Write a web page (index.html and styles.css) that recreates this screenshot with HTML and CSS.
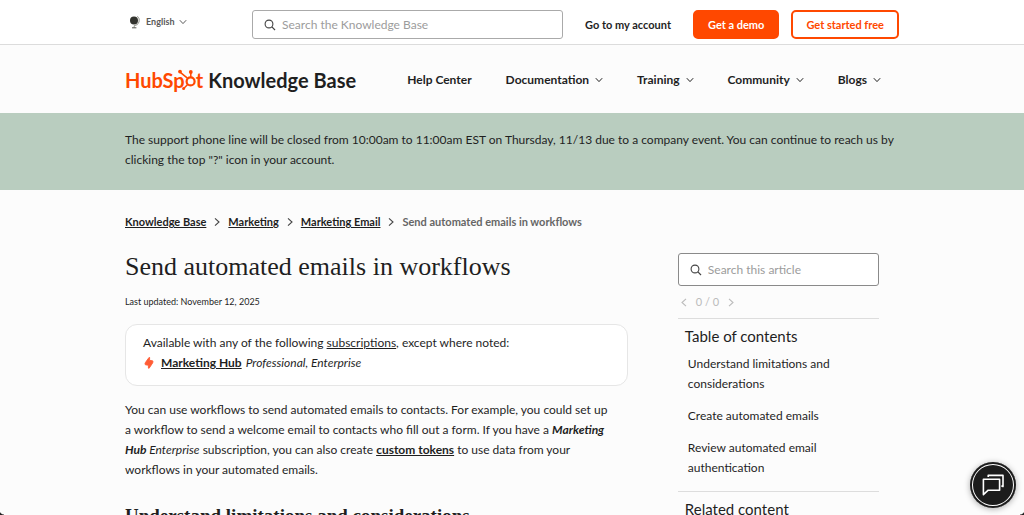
FILE: index.html
```html
<!DOCTYPE html>
<html lang="en">
<head>
<meta charset="utf-8">
<meta name="viewport" content="width=device-width, initial-scale=1">
<title>Send automated emails in workflows</title>
<link rel="stylesheet" href="styles.css">
</head>
<body>
<svg class="sprites" aria-hidden="true">
  <symbol id="down" viewBox="0 0 8 8"><path d="M0.8 2.2 4 5.6 7.2 2.2" fill="none" stroke="currentColor" stroke-width="1"/></symbol>
  <symbol id="next" viewBox="0 0 8 8"><path d="M2 0.4 6 4 2 7.6" fill="none" stroke="currentColor" stroke-width="1.1"/></symbol>
  <symbol id="prev" viewBox="0 0 8 8"><path d="M6 0.4 2 4 6 7.6" fill="none" stroke="currentColor" stroke-width="1.1"/></symbol>
  <symbol id="lens" viewBox="0 0 12 12"><circle cx="5" cy="5" r="3.9" fill="none" stroke="currentColor" stroke-width="1.1"/><path d="M7.9 7.9 11 11" stroke="currentColor" stroke-width="1.2"/></symbol>
</svg>

<div class="topbar">
  <div class="container topbar-row">
    <button class="language" type="button">
      <svg class="globe" viewBox="0 0 12 14" aria-hidden="true"><circle cx="5" cy="5.4" r="4" fill="#33342f"/><path d="M8.4 1.2A5.4 5.4 0 0 1 5.2 10.7L5.2 12.6" fill="none" stroke="#77786f" stroke-width="0.8"/><path d="M3 12.8H7.4" stroke="#55564f" stroke-width="1"/></svg>
      <span>English</span>
      <svg class="chevron" aria-hidden="true"><use href="#down"/></svg>
    </button>
    <label class="search search-main">
      <svg class="lens" aria-hidden="true"><use href="#lens"/></svg>
      <input type="search" placeholder="Search the Knowledge Base" aria-label="Search the Knowledge Base">
    </label>
    <div class="actions">
      <a class="account" href="#">Go to my account</a>
      <a class="button button-solid" href="#">Get a demo</a>
      <a class="button button-outline" href="#">Get started free</a>
    </div>
  </div>
</div>

<header class="container header">
  <a class="logo" href="#" aria-label="HubSpot Knowledge Base">
    <span class="logo-mark">HubSp<svg class="sprocket" viewBox="0 0 18 22" aria-hidden="true"><g fill="none" stroke="currentColor"><circle cx="12.6" cy="12.4" r="4" stroke-width="2.2"/><path d="M12.8 8V3.4M9.4 9.2 2 3.2M9.6 15.4 6 19.2" stroke-width="1.5"/></g><g fill="currentColor"><circle cx="12.8" cy="3" r="1.9"/><circle cx="2" cy="2.6" r="1.9"/><circle cx="5.6" cy="19.6" r="1.5"/></g></svg>t</span>
    <span>Knowledge Base</span>
  </a>
  <nav class="nav" aria-label="Main">
    <a href="#">Help Center</a>
    <button type="button">Documentation <svg class="chevron" aria-hidden="true"><use href="#down"/></svg></button>
    <button type="button">Training <svg class="chevron" aria-hidden="true"><use href="#down"/></svg></button>
    <button type="button">Community <svg class="chevron" aria-hidden="true"><use href="#down"/></svg></button>
    <button type="button">Blogs <svg class="chevron" aria-hidden="true"><use href="#down"/></svg></button>
  </nav>
</header>

<div class="notice">
  <p class="container">The support phone line will be closed from 10:00am to 11:00am EST on Thursday, 11/13 due to a company event. You can continue to reach us by clicking the top "?" icon in your account.</p>
</div>

<div class="container page">
  <nav class="breadcrumbs" aria-label="Breadcrumb">
    <a href="#">Knowledge Base</a><svg class="chevron" aria-hidden="true"><use href="#next"/></svg>
    <a href="#">Marketing</a><svg class="chevron" aria-hidden="true"><use href="#next"/></svg>
    <a href="#">Marketing Email</a><svg class="chevron" aria-hidden="true"><use href="#next"/></svg>
    <span>Send automated emails in workflows</span>
  </nav>
  <div class="columns">
    <main class="article">
      <h1>Send automated emails in workflows</h1>
      <p class="updated">Last updated: November 12, 2025</p>
      <div class="availability">
        <p>Available with any of the following <a href="#">subscriptions</a>, except where noted:</p>
        <p class="product"><svg class="bolt" viewBox="0 0 10 12" aria-hidden="true"><path d="M5.6 0.4V3.4L8.6 3.8Q9.4 4.8 8.6 6L5 11.4 4.4 11V8.2L1.4 7.8Q0.6 6.8 1.4 5.6L5 0.5Z" fill="#ff5c35" stroke="#ff5c35" stroke-width="0.9" stroke-linejoin="round"/></svg><a href="#"><b>Marketing Hub</b></a> <i>Professional, Enterprise</i></p>
      </div>
      <p class="intro">You can use workflows to send automated emails to contacts. For example, you could set up a workflow to send a welcome email to contacts who fill out a form. If you have a <i><b>Marketing Hub</b> Enterprise</i> subscription, you can also create <a href="#"><b>custom tokens</b></a> to use data from your workflows in your automated emails.</p>
      <h2>Understand limitations and considerations</h2>
    </main>
    <aside class="sidebar">
      <label class="search">
        <svg class="lens" aria-hidden="true"><use href="#lens"/></svg>
        <input type="search" placeholder="Search this article" aria-label="Search this article">
      </label>
      <div class="matches">
        <button type="button" aria-label="Previous match"><svg class="arrow" aria-hidden="true"><use href="#prev"/></svg></button>
        <span>0 / 0</span>
        <button type="button" aria-label="Next match"><svg class="arrow" aria-hidden="true"><use href="#next"/></svg></button>
      </div>
      <section class="panel">
        <h3>Table of contents</h3>
        <ul>
          <li><a href="#">Understand limitations and considerations</a></li>
          <li><a href="#">Create automated emails</a></li>
          <li><a href="#">Review automated email authentication</a></li>
        </ul>
      </section>
      <section class="panel">
        <h3>Related content</h3>
      </section>
    </aside>
  </div>
</div>

<button class="chat" type="button" aria-label="Open chat">
  <svg viewBox="0 0 24 24" aria-hidden="true"><g fill="none" stroke="#fff" stroke-width="1.6" stroke-linejoin="round"><path d="M7.2 4V2.4H22V13.6L20.4 12.8"/><path d="M2.4 6.2H18.6V17.2H7.2L2.4 21.6Z"/></g></svg>
</button>
<div class="corner corner-left"></div>
<div class="corner corner-right"></div>
</body>
</html>
```
FILE: styles.css
```css
* { box-sizing: border-box; }
body {
  margin: 0;
  background: #fcfcfc;
  color: #1f1f1f;
  font: 12px/20px Lato, sans-serif;
  overflow-x: hidden;
}
h1, h2, h3, p, ul { margin: 0; padding: 0; }
a { color: inherit; }
button, input { font: inherit; color: inherit; border: 0; background: none; padding: 0; }
svg { flex: none; }
.sprites { display: none; }
.container { max-width: 774px; margin: 0 auto; }
.chevron { width: 8px; height: 8px; }

.topbar { background: #fff; border-bottom: 1px solid #dcdcdc; }
.topbar-row { display: flex; align-items: center; padding: 10px 0 5px; }
.language { display: flex; align-items: center; width: 127px; padding: 0 0 6px 4px; font-size: 9px; font-weight: 700; line-height: 12px; color: #5a5a5a; }
.globe { width: 12px; height: 14px; margin-right: 5px; }
.language .chevron { margin-left: 5px; }
.search { display: flex; align-items: center; gap: 6px; height: 33px; padding: 0 11px; background: #fff; border: 1px solid #8a8a8a; border-radius: 3px; }
.search input { flex: 1; min-width: 0; outline: 0; }
.search input::placeholder { color: #9c9c9c; opacity: 1; }
.lens { width: 12px; height: 12px; color: #444; }
.search-main { flex: 1; height: 29px; border-color: #aaa; }
.actions { display: flex; align-items: center; font-size: 11px; font-weight: 700; }
.account { margin: 0 22px; text-decoration: none; }
.button { padding: 0 13px; border: 2px solid #ff4800; border-radius: 5px; line-height: 25px; text-decoration: none; }
.button-solid { background: #ff4800; color: #fff; margin-right: 12px; }
.button-outline { color: #ff4800; }

.header { display: flex; align-items: center; justify-content: space-between; padding: 21px 18px 19px 0; }
.logo { display: flex; align-items: center; gap: 5px; font-size: 20px; font-weight: 700; line-height: 28px; text-decoration: none; }
.logo-mark { display: flex; align-items: center; color: #ff4800; }
.sprocket { width: 18px; height: 22px; margin-left: -7px; }
.nav { display: flex; gap: 34px; font-weight: 700; }
.nav a { text-decoration: none; }
.nav button { display: flex; align-items: center; gap: 6px; }

.notice { background: #b9cdbf; padding: 17px 0 20px; }

.page { padding: 22px 0 40px; }
.breadcrumbs { display: flex; align-items: center; gap: 7px; font-size: 11px; font-weight: 700; color: #666; }
.breadcrumbs a { color: #1f1f1f; }
.breadcrumbs .chevron { color: #444; }
.columns { display: grid; grid-template-columns: 5fr 2fr; gap: 50px; padding: 20px 20px 0 0; }
h1 { font: 400 26px/30px "Liberation Serif", serif; }
.updated { margin-top: 10px; font-size: 9px; }
.availability { margin: 12px 0 14px; padding: 8px 17px 12px; background: #fff; border: 1px solid #e6e6e6; border-radius: 12px; }
.product { display: flex; align-items: center; gap: 4px; }
.bolt { width: 10px; height: 12px; margin: 0 3px 0 1px; }
.intro { padding-right: 14px; }
h2 { margin-top: 24px; font: 700 19px/24px "Liberation Serif", serif; }

.sidebar { padding-top: 1px; }
.matches { display: flex; align-items: center; gap: 8px; height: 32px; padding-left: 2px; font-size: 11px; color: #bbb; }
.arrow { display: block; width: 8px; height: 9px; }
.panel { border-top: 1px solid #ddd; padding: 5px 7px 13px; }
.panel h3 { font-size: 15px; font-weight: 400; line-height: 24px; }
.panel ul { list-style: none; padding: 6px 3px 0; }
.panel li { margin-bottom: 12px; }
.panel li:last-child { margin-bottom: 0; }
.panel a { text-decoration: none; }

.chat { position: fixed; right: 8px; bottom: 7px; width: 46px; height: 46px; display: grid; place-items: center; border-radius: 50%; background: #1c1c1c; box-shadow: inset 0 0 0 2px #1c1c1c, inset 0 0 0 3px #fff, 0 1px 6px #0005; }
.chat svg { width: 24px; height: 24px; }
.corner { position: fixed; bottom: 0; width: 4px; height: 5px; }
.corner-left { left: 0; background: radial-gradient(circle at 100% 0, transparent 4px, #222 5px); }
.corner-right { right: 0; background: radial-gradient(circle at 0 0, transparent 4px, #222 5px); }
```
